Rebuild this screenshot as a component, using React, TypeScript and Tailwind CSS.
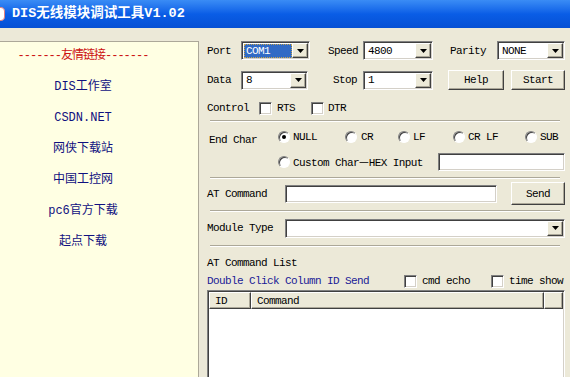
import React from "react";

const sunken =
  "bg-white border border-t-[#808080] border-l-[#808080] border-b-white border-r-white shadow-[inset_1px_1px_0_#404040,inset_-1px_-1px_0_#d4d0c8]";
const raised =
  "bg-[#ece9d8] border border-t-white border-l-white border-b-[#404040] border-r-[#404040] shadow-[inset_-1px_-1px_0_#aca899]";

function Arrow() {
  return (
    <div className={`${raised} w-[16px] h-full flex items-center justify-center`}>
      <svg width="7" height="4" viewBox="0 0 7 4">
        <path d="M0 0h7L3.5 4z" fill="#000" />
      </svg>
    </div>
  );
}

function Combo({ value, w, selected }: { value: string; w: string; selected?: boolean }) {
  return (
    <div className={`${sunken} ${w} h-[19px] flex items-stretch p-[1px] shrink-0`}>
      <div className="flex-1 flex items-center pl-[1px]">
        {selected ? (
          <span className="bg-[#316ac5] text-white h-[14px] leading-[12px] w-full pl-[1px] border border-dotted border-[#c7a54f]">
            {value}
          </span>
        ) : (
          <span className="pl-[2px]">{value}</span>
        )}
      </div>
      <Arrow />
    </div>
  );
}

function Btn({ label, w, h }: { label: string; w: string; h: string }) {
  return (
    <div className={`${raised} ${w} ${h} flex items-center justify-center shrink-0`}>{label}</div>
  );
}

function Check() {
  return <div className={`${sunken} w-[13px] h-[13px] shrink-0`} />;
}

function Radio({ checked }: { checked?: boolean }) {
  return (
    <div className="w-[12px] h-[12px] rounded-full bg-white border border-t-[#808080] border-l-[#808080] border-b-white border-r-white shadow-[inset_1px_1px_0_#404040] flex items-center justify-center shrink-0">
      {checked && <div className="w-[4px] h-[4px] rounded-full bg-black" />}
    </div>
  );
}

function Sep() {
  return <div className="ml-[11px] w-[350px] h-[2px] border-t border-t-[#aca899] border-b border-b-white shrink-0" />;
}

const links = ["DIS工作室", "CSDN.NET", "网侠下载站", "中国工控网", "pc6官方下载", "起点下载"];

export default function App() {
  return (
    <div className="w-[570px] h-[377px] overflow-hidden flex flex-col bg-[#ece9d8] font-['Liberation_Mono','Noto_Sans_CJK_SC',monospace] text-black">
      {/* Title bar */}
      <div className="h-[28px] shrink-0 flex items-center bg-gradient-to-b from-[#3a8cf5] via-[#0a5de6] to-[#0650d4] text-white">
        <div className="w-[16px] h-[14px] -ml-[11px] bg-white rounded-sm border border-[#e08080]" />
        <span className="ml-[7px] font-bold text-[13.5px] leading-none">DIS无线模块调试工具V1.02</span>
      </div>

      <div className="flex-1 flex min-h-0 pt-[13px]">
        {/* Left links panel */}
        <div className="w-[199px] shrink-0 bg-[#ffffe3] border-t border-r border-[#aca899] text-[12px]">
          <div className="w-[166px] -mt-[1px] flex flex-col items-center">
            <div className="h-[31px] leading-[31px] text-[#cc1010] tracking-[-1px]">-------友情链接-------</div>
            {links.map((l) => (
              <div key={l} className="h-[31px] leading-[31px] text-[#10107f]">
                {l}
              </div>
            ))}
          </div>
        </div>

        {/* Right settings panel */}
        <div className="flex-1 flex flex-col min-h-0 text-[11px] tracking-[-0.6px] leading-[14px]">
          {/* Row 1 */}
          <div className="flex items-center h-[19px] pl-[8px]">
            <span className="w-[34px]">Port</span>
            <Combo value="COM1" w="w-[69px]" selected />
            <span className="ml-[18px] w-[35px]">Speed</span>
            <Combo value="4800" w="w-[70px]" />
            <span className="ml-[17px] w-[47px]">Parity</span>
            <Combo value="NONE" w="w-[68px]" />
          </div>

          {/* Row 2 */}
          <div className="flex items-center h-[20px] mt-[10px] pl-[8px]">
            <span className="w-[34px]">Data</span>
            <Combo value="8" w="w-[67px]" />
            <span className="ml-[25px] w-[30px]">Stop</span>
            <Combo value="1" w="w-[70px]" />
            <div className="ml-[15px]">
              <Btn label="Help" w="w-[56px]" h="h-[20px]" />
            </div>
            <div className="ml-[7px]">
              <Btn label="Start" w="w-[54px]" h="h-[20px]" />
            </div>
          </div>

          {/* Row 3 */}
          <div className="flex items-center h-[14px] mt-[11px] pl-[8px]">
            <span className="w-[42px]">Control</span>
            <div className="ml-[10px]">
              <Check />
            </div>
            <span className="ml-[5px] w-[18px]">RTS</span>
            <div className="ml-[16px]">
              <Check />
            </div>
            <span className="ml-[4px]">DTR</span>
          </div>

          <div className="mt-[5px]">
            <Sep />
          </div>

          {/* End char */}
          <div className="flex mt-[8px] pl-[10px]">
            <span className="w-[69px] h-[14px] leading-[14px] pt-[3px]">End Char</span>
            <div className="flex flex-col">
              <div className="flex items-center h-[14px]">
                <div className="w-[67px] flex items-center gap-[3px]">
                  <Radio checked />
                  <span>NULL</span>
                </div>
                <div className="w-[53px] flex items-center gap-[4px]">
                  <Radio />
                  <span>CR</span>
                </div>
                <div className="w-[55px] flex items-center gap-[3px]">
                  <Radio />
                  <span>LF</span>
                </div>
                <div className="w-[72px] flex items-center gap-[3px]">
                  <Radio />
                  <span>CR LF</span>
                </div>
                <div className="flex items-center gap-[3px]">
                  <Radio />
                  <span>SUB</span>
                </div>
              </div>
              <div className="flex items-center h-[18px] mt-[9px]">
                <div className="w-[160px] flex items-center gap-[3px]">
                  <Radio />
                  <span>
                    Custom Char<span className="font-['Noto_Sans_CJK_SC'] tracking-normal">—</span>HEX Input
                  </span>
                </div>
                <div className={`${sunken} w-[127px] h-[18px]`} />
              </div>
            </div>
          </div>

          <div className="mt-[6px]">
            <Sep />
          </div>

          {/* AT Command */}
          <div className="flex items-center h-[23px] mt-[3px] pl-[8px]">
            <span className="w-[78px]">AT Command</span>
            <div className={`${sunken} w-[212px] h-[18px]`} />
            <div className="ml-[14px]">
              <Btn label="Send" w="w-[54px]" h="h-[23px]" />
            </div>
          </div>

          <div className="mt-[5px]">
            <Sep />
          </div>

          {/* Module Type */}
          <div className="flex items-center h-[18px] mt-[7px] pl-[8px]">
            <span className="w-[78px]">Module Type</span>
            <Combo value="" w="w-[280px]" />
          </div>

          <div className="mt-[8px]">
            <Sep />
          </div>

          <div className="mt-[9px] pl-[8px] h-[14px]">AT Command List</div>

          <div className="flex items-center h-[14px] mt-[4px] pl-[8px]">
            <span className="w-[197px] text-[#1a1a96]">Double Click Column ID Send</span>
            <Check />
            <span className="ml-[5px] w-[48px]">cmd echo</span>
            <div className="ml-[21px]">
              <Check />
            </div>
            <span className="ml-[5px]">time show</span>
          </div>

          {/* List view */}
          <div className={`${sunken} mt-[2px] ml-[8px] w-[358px] flex-1 min-h-0 p-[1px] -mb-[4px]`}>
            <div className="flex h-[17px]">
              <div className={`${raised} w-[42px] h-full flex items-center pl-[5px]`}>ID</div>
              <div className={`${raised} w-[293px] h-full flex items-center pl-[5px]`}>Command</div>
              <div className={`${raised} flex-1 h-full`} />
            </div>
          </div>
        </div>
      </div>
    </div>
  );
}
